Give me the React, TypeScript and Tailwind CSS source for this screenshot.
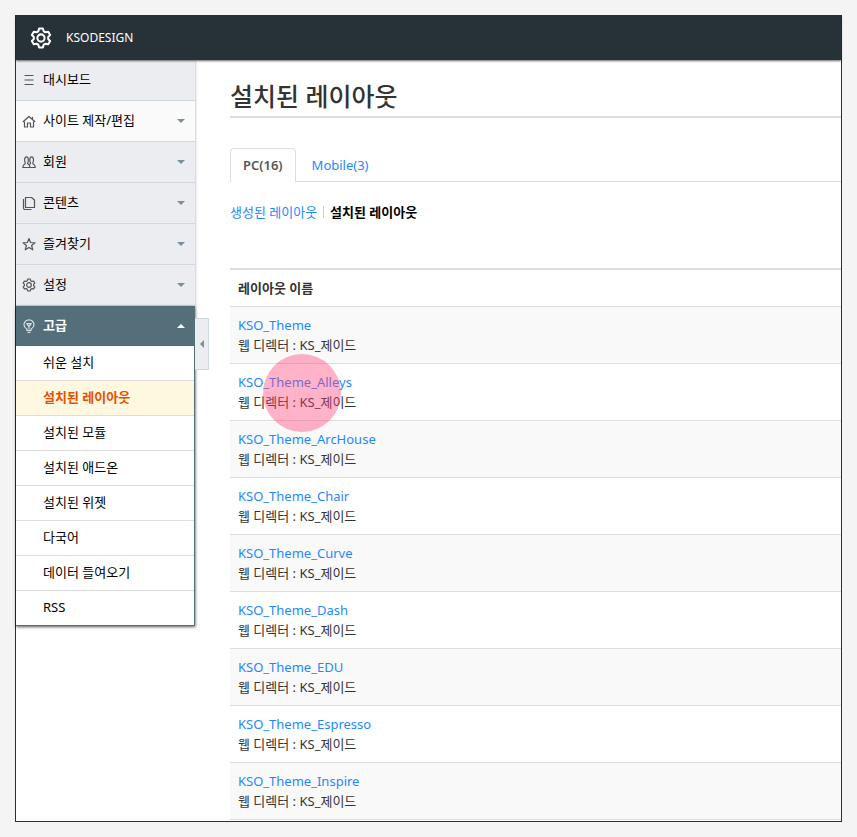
import type { ReactNode } from "react";

const icons: Record<string, ReactNode> = {
  menu: <path d="M2.5 2.500H11.500M2.500 7H11.500M2.500 11.500H11.500" />,
  home: (
    <>
      <path d="M.8 8 7 2.500 13.200 8" />
      <path d="M2.500 7.500V13H5.500V9H8.500V13H11.500V7.500M10.500 3V5" />
    </>
  ),
  users: (
    <>
      <path d="M6.800 12.500H.8C.8 10.200 1.500 9.700 3.200 8.800V7.900C2.300 6.400 2.200 1.800 4.500 1.800S6.600 6.400 5.700 7.900V8.800C7.200 9.600 8 10 8 12.500H6.500" />
      <path d="M8 12.500H13.300C13.300 10.200 12.600 9.700 10.900 8.800V7.900C11.800 6.400 11.900 1.800 9.600 1.800S7.500 6.400 8.400 7.900V8.800L7.300 9.500" />
    </>
  ),
  docs: (
    <>
      <path d="M3.500 1.500H9.500L12.500 4V11.500H3.500Z" />
      <path d="M1.500 3V12C1.500 13 2 13.500 3 13.500H9.500" />
    </>
  ),
  star: <path d="M7 1.500 8.600 5.500 13 5.800 9.600 8.500 10.800 12.800 7 10.400 3.200 12.800 4.400 8.500 1 5.800 5.400 5.500Z" />,
  gear: (
    <>
      <path d="M5.800 1H8.200L8.700 2.700 9.900 3.400 11.600 3 12.800 5.100 11.600 6.300V7.700L12.800 8.900 11.600 11 9.900 10.600 8.700 11.300 8.200 13H5.800L5.300 11.300 4.100 10.600 2.400 11 1.200 8.900 2.400 7.700V6.300L1.200 5.100 2.400 3 4.100 3.400 5.300 2.700Z" />
      <circle cx="7" cy="7" r="2.300" />
    </>
  ),
  bulb: (
    <>
      <path d="M4.800 10C2.900 8.900 2 7.500 2 5.800A5 5 0 0 1 12 5.800C12 7.500 11.100 8.900 9.200 10V11.300H4.800Z" />
      <path d="M4.700 4.700H9.300L7 7.500ZM7 7.500V10M5.500 13.300H8.500" />
    </>
  ),
};

function Icon({ name, className }: { name: string; className: string }) {
  return (
    <svg
      viewBox="0 0 14 14"
      className={className}
      fill="none"
      stroke="currentColor"
      strokeLinejoin="round"
      aria-hidden="true"
    >
      {icons[name]}
    </svg>
  );
}

const menu = [
  { icon: "menu", label: "대시보드", opens: false, bg: "bg-[#ebedf0]" },
  { icon: "home", label: "사이트 제작/편집", opens: true, bg: "bg-[#fafafa]" },
  { icon: "users", label: "회원", opens: true, bg: "bg-[#ebedf0]" },
  { icon: "docs", label: "콘텐츠", opens: true, bg: "bg-[#ebedf0]" },
  { icon: "star", label: "즐겨찾기", opens: true, bg: "bg-[#ebedf0]" },
  { icon: "gear", label: "설정", opens: true, bg: "bg-[#ebedf0]" },
];

const submenu = [
  "쉬운 설치",
  "설치된 레이아웃",
  "설치된 모듈",
  "설치된 애드온",
  "설치된 위젯",
  "다국어",
  "데이터 들여오기",
  "RSS",
];

const layouts = [
  "KSO_Theme",
  "KSO_Theme_Alleys",
  "KSO_Theme_ArcHouse",
  "KSO_Theme_Chair",
  "KSO_Theme_Curve",
  "KSO_Theme_Dash",
  "KSO_Theme_EDU",
  "KSO_Theme_Espresso",
  "KSO_Theme_Inspire",
];

function Sidebar() {
  return (
    <nav className="relative w-[179px] shrink-0 self-start">
      <ul className="shadow-[1px_1px_2px_rgba(0,0,0,0.2)]">
        {menu.map((item) => (
          <li key={item.label}>
            <button
              type="button"
              className={`flex h-[41px] w-full items-center border-b border-[#cfd8dc] pr-2.5 pl-1.5 ${item.bg}`}
            >
              <Icon name={item.icon} className="mr-[7px] size-3.5 stroke-[1.200] text-[#555]" />
              <span className="pb-0.5">{item.label}</span>
              {item.opens && (
                <span className="ml-auto border-x-4 border-t-4 border-x-transparent border-t-[#78909c]" />
              )}
            </button>
          </li>
        ))}
        <li className="shadow-[0_1px_3px_rgba(0,0,0,0.5)]">
          <button
            type="button"
            aria-expanded="true"
            className="flex h-10 w-full items-center bg-[#546e7a] pr-2.5 pl-1.5 font-bold text-white"
          >
            <Icon name="bulb" className="mr-[7px] size-3.5 stroke-[1.200] text-[#d5dde0]" />
            <span className="pb-0.5">고급</span>
            <span className="ml-auto border-x-4 border-b-4 border-x-transparent border-b-white" />
          </button>
          <ul className="border-r border-[#546e7a] bg-white">
            {submenu.map((label) => (
              <li key={label} className="border-b border-[#ddd] last:border-[#546e7a]">
                <a
                  href="#"
                  className={`flex h-[34px] items-center pb-0.5 pl-[27px] ${
                    label === "설치된 레이아웃" ? "bg-[#fff8e1] font-bold text-[#e65100]" : ""
                  }`}
                >
                  {label}
                </a>
              </li>
            ))}
          </ul>
        </li>
      </ul>
      <button
        type="button"
        aria-label="메뉴 접기"
        className="absolute top-[258px] left-full flex h-[52px] w-3.5 items-center justify-center border border-l-0 border-[#cfd8dc] bg-[#ebedf0]"
      >
        <span className="border-y-4 border-r-4 border-y-transparent border-r-[#78909c]" />
      </button>
    </nav>
  );
}

export default function App() {
  return (
    <div className="min-h-screen bg-[#f4f4f4] p-[15px] font-['Noto_Sans','Noto_Sans_CJK_KR',sans-serif] text-[13px] leading-5 text-black">
      <div className="border border-[#263238] bg-white">
        <header className="relative z-10 flex h-11 items-center bg-[#263238] pl-3.5 text-[12px] text-white shadow-[0_1px_2px_rgba(0,0,0,0.6)]">
          <Icon name="gear" className="mr-3.5 size-[22px] stroke-[1.300]" />
          KSODESIGN
        </header>
        <div className="flex">
          <Sidebar />
          <main className="min-w-0 flex-1 pt-5 pb-px pl-[35px]">
            <h1 className="border-b-2 border-[#ddd] pb-1 text-[25px] leading-8 font-medium text-[#333]">
              설치된 레이아웃
            </h1>
            <div className="mt-[30px] flex border-b border-[#ddd]">
              <a
                href="#"
                className="-mb-px rounded-t border border-b-0 border-[#ddd] bg-white px-3 pt-1.5 pb-[7px] font-semibold text-[#555]"
              >
                PC(16)
              </a>
              <a href="#" className="px-4 pt-[7px] pb-1.5 text-[#1e88ff]">
                Mobile(3)
              </a>
            </div>
            <div className="mt-5 flex items-center gap-1.5">
              <a href="#" className="text-[#1e88ff]">
                생성된 레이아웃
              </a>
              <span className="h-3 w-px bg-[#ccc]" />
              <a href="#" className="font-bold">
                설치된 레이아웃
              </a>
            </div>
            <table className="mt-[46px] w-full border-separate border-spacing-0 border-t-2 border-[#ddd] text-left text-[#333]">
              <thead>
                <tr>
                  <th scope="col" className="border-b border-[#ddd] p-2 font-bold">
                    레이아웃 이름
                  </th>
                </tr>
              </thead>
              <tbody>
                {layouts.map((name) => (
                  <tr key={name} className="odd:bg-[#f9f9f9]">
                    <td className="relative border-b border-[#ddd] p-2">
                      <a href="#" className="block text-[#1e88ff]">
                        {name}
                      </a>
                      <p>웹 디렉터 : KS_제이드</p>
                      {name === "KSO_Theme_Alleys" && (
                        <span className="pointer-events-none absolute -top-2.5 left-[33px] z-10 size-[78px] rounded-full bg-[#ff3f75]/40" />
                      )}
                    </td>
                  </tr>
                ))}
              </tbody>
            </table>
          </main>
        </div>
      </div>
    </div>
  );
}
